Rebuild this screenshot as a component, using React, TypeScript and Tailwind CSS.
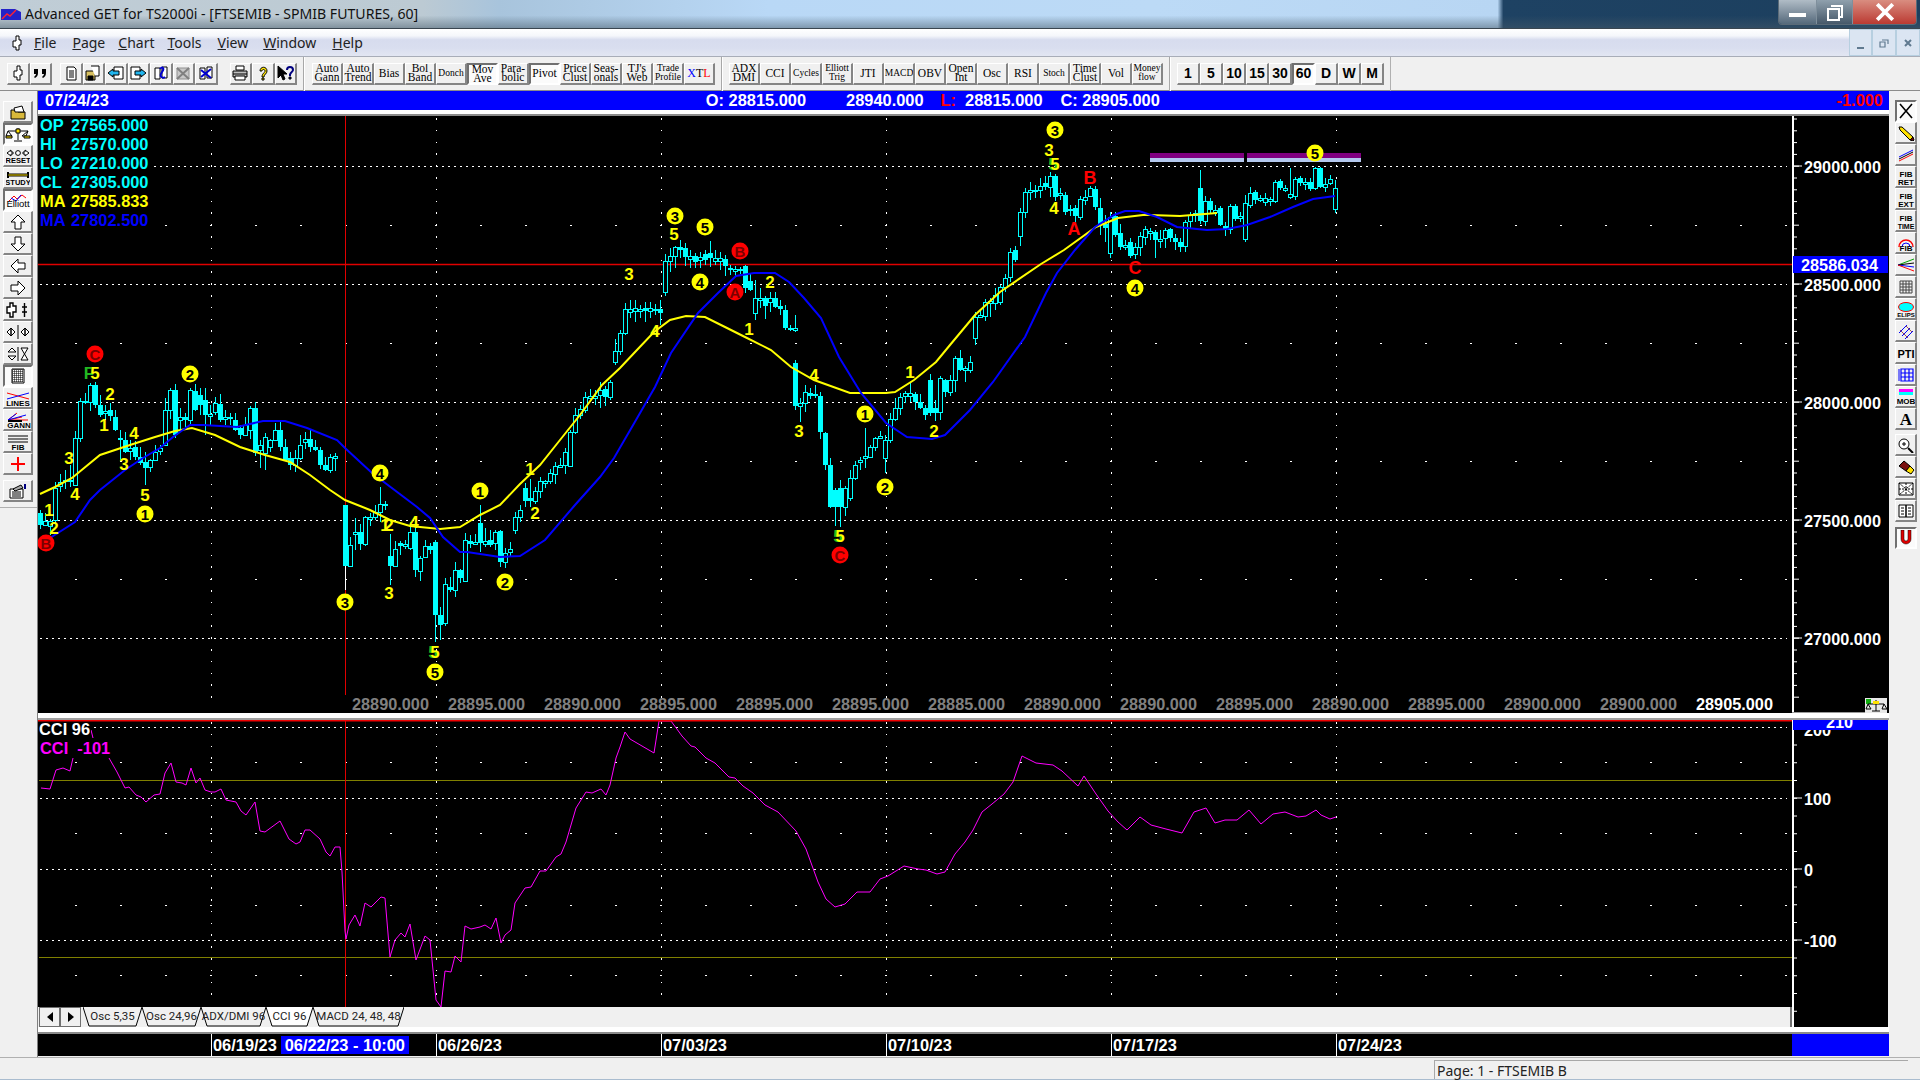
import type { ReactNode } from "react"

type Candle = [number, number, number, number?, number?]

// candle rows are [top, bottom, filled, high, low] in page pixels, one bar every 5px
const candleSegments: { start: number; rows: Candle[] }[] = [
  {
    start: 40,
    rows: [
      [513, 525, 1], [521, 525, 0], [521, 526, 0], [488, 520, 0], [482, 486, 0, 474, 492], [480, 482, 1, 470], [480, 482, 1, 465], [438, 485, 0],
      [401, 438, 0], [401, 403, 1], [385, 402, 0], [385, 405, 1, 382], [405, 415, 1], [411, 413, 0, 405], [410, 416, 1, 403], [417, 430, 1],
      [438, 440, 1, 430, 460], [440, 452, 1], [448, 451, 0, 440], [447, 457, 1], [457, 463, 1], [462, 468, 1, 452, 485], [460, 467, 0], [452, 460, 0],
      [448, 451, 0, 445], [410, 445, 0, 398], [390, 410, 0], [390, 435, 1], [417, 420, 0, 408, 430], [417, 420, 1], [390, 420, 0, 388], [391, 410, 1],
      [395, 405, 1, 388, 415], [400, 415, 1, 388, 435], [414, 416, 0, 405, 425], [403, 412, 0], [404, 420, 1], [417, 419, 0, 410, 425], [417, 419, 1, 413, 425], [420, 430, 1],
      [428, 435, 1], [425, 435, 0], [408, 430, 0], [408, 453, 1], [445, 450, 0, 440, 468], [437, 453, 0, 433, 470], [440, 447, 0], [430, 440, 0],
      [430, 447, 1, 420], [447, 460, 1], [458, 465, 1, 452, 470], [458, 465, 0, 450, 472], [445, 458, 0], [439, 442, 0, 432], [439, 447, 1, 430], [447, 450, 1],
      [450, 465, 1], [465, 470, 1], [457, 470, 0, 454, 473], [456, 458, 0, 453, 471],
    ],
  },
  {
    start: 345,
    rows: [
      [505, 566, 1, 505, 567], [545, 566, 0], [532, 534, 0, 518, 550], [532, 544, 1, 524, 550], [517, 544, 0, 516], [517, 519, 0], [512, 517, 0, 505, 520], [504, 512, 0, 487, 522], [504, 506, 1],
    ],
  },
  {
    start: 390,
    rows: [
      [556, 566, 1, 534, 585], [549, 566, 0], [543, 546, 1], [544, 546, 0, 540], [532, 548, 0], [532, 570, 1], [558, 571, 0, 556, 581], [546, 557, 0, 540], [546, 550, 1],
      [542, 615, 1, 540, 642], [615, 625, 1, 607, 640], [584, 623, 0], [587, 590, 1], [570, 590, 0, 562], [570, 578, 1], [540, 581, 0, 533], [541, 544, 1, 535], [542, 544, 0],
      [523, 543, 1, 505], [541, 544, 0, 528], [540, 545, 1, 530], [532, 543, 0, 530], [531, 562, 1], [553, 562, 0, 548, 568], [549, 552, 0, 542],
    ],
  },
  {
    start: 515,
    rows: [
      [517, 530, 0, 512], [510, 517, 0, 505, 522], [488, 501, 1, 483, 507], [498, 501, 1, 479, 507], [491, 501, 0, 487, 504], [481, 491, 0, 477], [481, 483, 0], [473, 481, 0, 469, 484],
      [466, 474, 0, 462, 484], [465, 467, 0, 458], [452, 465, 0, 448], [432, 466, 0, 430, 467], [415, 432, 0, 408], [409, 415, 0, 405, 419], [397, 410, 0, 392, 413], [396, 398, 0, 389],
      [396, 398, 0, 390, 405], [390, 395, 0, 382, 408], [389, 397, 1, 386], [382, 397, 0, 380], [351, 362, 0, 339, 365], [333, 351, 0, 330, 355], [309, 333, 0, 303, 335], [309, 312, 0, 300, 318],
      [308, 311, 0, 300, 322], [309, 311, 0, 305, 318], [308, 311, 1, 302, 322], [308, 311, 0, 302, 318], [309, 311, 1, 304, 315], [309, 313, 1, 300, 325],
      [261, 292, 0, 254, 296], [256, 261, 0, 248, 272], [247, 256, 0, 246, 268], [247, 250, 1, 240, 258], [248, 257, 1, 243], [256, 259, 0, 250, 268], [256, 262, 1, 253, 268], [257, 260, 0, 252, 268],
      [254, 260, 1, 250, 265], [253, 258, 1, 241, 267], [258, 261, 0, 250, 265], [258, 261, 0, 252, 270], [259, 266, 1, 255, 276], [268, 270, 1, 265, 275], [269, 271, 0, 266, 276], [269, 271, 1, 267, 274],
      [266, 288, 1, 265], [281, 290, 1],
      [298, 313, 0, 280, 320], [298, 300, 0, 288, 308], [298, 306, 1, 296, 319], [298, 302, 0, 292, 312], [298, 307, 1, 292, 308], [306, 309, 1, 300, 315], [310, 328, 1, 305, 330], [328, 330, 1, 325, 331], [328, 330, 0, 315, 332],
    ],
  },
  {
    start: 795,
    rows: [
      [363, 406, 1], [403, 406, 0, 398, 422], [392, 403, 0, 385], [393, 396, 1, 388], [394, 396, 1, 385], [396, 432, 1], [433, 465, 1], [465, 507, 1], [490, 507, 1, 488, 526], [488, 507, 1, 480, 527],
      [488, 507, 0], [478, 498, 0, 470], [465, 478, 0, 461], [460, 462, 0, 457, 470], [456, 458, 0, 428, 468], [447, 457, 0, 445], [438, 447, 0, 437], [436, 438, 0, 431], [440, 458, 0, 435, 473], [419, 440, 0],
      [408, 419, 0], [397, 408, 0], [393, 396, 0, 391, 403], [393, 396, 0, 382, 402], [394, 402, 1, 392, 410], [402, 408, 1], [408, 415, 1, 405, 420], [380, 413, 1], [408, 413, 1, 400, 421], [378, 412, 0, 376, 420],
      [380, 392, 1], [380, 392, 0, 375, 396], [358, 380, 0, 356, 392], [358, 370, 1], [368, 370, 0, 366, 382], [362, 370, 0],
    ],
  },
  {
    start: 975,
    rows: [
      [317, 338, 0, 312, 345], [315, 317, 0, 310], [302, 316, 0, 299, 321], [301, 303, 0, 298, 317], [295, 303, 0, 288, 310], [287, 302, 0, 285, 305], [278, 287, 0, 274], [252, 277, 0, 248, 282],
      [250, 260, 1, 246, 262], [212, 236, 0, 208, 246], [192, 212, 0, 188, 218], [190, 192, 0, 182, 200], [190, 192, 1, 185, 198], [186, 190, 0, 178, 198], [183, 187, 1, 176, 190], [176, 187, 0, 172, 197],
      [176, 197, 1, 174], [193, 195, 0, 188, 200], [195, 212, 1, 192, 215], [209, 211, 1, 205, 216], [208, 216, 1, 205, 222], [199, 217, 0, 196, 220], [197, 200, 0, 190, 205], [188, 196, 0, 186],
      [189, 207, 1, 186, 210], [208, 225, 1, 198, 235], [224, 228, 1, 215, 242], [217, 253, 0, 212, 258], [216, 235, 1, 212], [233, 247, 1, 224, 250], [245, 247, 0, 240, 250], [242, 256, 1, 238, 258],
      [247, 254, 0, 243, 259], [236, 247, 0, 232, 256], [229, 237, 0, 226, 245], [231, 233, 0, 228, 240], [232, 240, 1, 230, 258], [239, 241, 0, 230, 248], [230, 238, 0, 228, 248], [229, 238, 1, 228, 242],
      [238, 242, 1, 234, 250], [242, 247, 1, 238, 252], [222, 246, 0, 220, 252], [215, 221, 0, 212, 228], [213, 215, 0, 210, 222], [188, 221, 1, 170, 224], [201, 221, 0, 196, 226], [201, 210, 1, 198, 214],
      [210, 212, 0, 205, 216], [208, 225, 1, 206, 226], [226, 229, 1, 222, 236], [206, 229, 0, 204, 234], [206, 219, 1, 204], [216, 218, 0, 212, 222], [203, 239, 0, 195, 242], [193, 205, 0, 187, 208],
      [192, 200, 1, 190], [198, 200, 0, 195, 202], [198, 202, 0, 193, 206], [199, 201, 0, 197, 206], [182, 201, 0, 180], [181, 188, 1, 179, 190], [188, 190, 0, 185, 192], [194, 197, 0, 168, 199],
      [179, 196, 0, 177], [178, 183, 1, 176, 186], [182, 184, 0, 178, 190], [182, 189, 1, 178, 191], [168, 188, 0, 167], [168, 187, 1, 167, 188], [184, 187, 0, 178], [179, 183, 0, 175, 185],
      [188, 209, 0, 180, 213],
    ],
  },
]

const yellowLine = [[40, 494], [55, 487], [72, 478], [100, 455], [130, 445], [155, 437], [175, 431], [192, 428], [215, 435], [240, 447], [265, 455], [290, 462], [310, 475], [330, 490], [345, 500], [370, 510], [390, 520], [410, 526], [440, 529], [460, 527], [480, 515], [500, 505], [520, 484], [540, 465], [560, 440], [580, 415], [602, 385], [620, 368], [636, 351], [654, 332], [670, 320], [686, 316], [705, 317], [725, 327], [745, 337], [771, 350], [791, 367], [814, 380], [850, 393], [886, 393], [895, 392], [914, 380], [936, 362], [950, 345], [975, 315], [1000, 292], [1041, 264], [1064, 250], [1096, 227], [1118, 218], [1143, 215], [1150, 215], [1180, 216], [1217, 213]]

const blueLine = [[50, 538], [75, 522], [90, 500], [100, 490], [125, 470], [143, 458], [160, 448], [173, 437], [190, 425], [203, 425], [237, 427], [263, 421], [285, 421], [307, 428], [337, 440], [345, 448], [372, 473], [417, 507], [430, 518], [443, 537], [460, 552], [467, 552], [500, 557], [520, 556], [545, 540], [575, 505], [600, 477], [614, 458], [636, 420], [655, 387], [671, 353], [698, 313], [718, 293], [736, 276], [754, 273], [775, 273], [789, 282], [804, 298], [821, 318], [839, 357], [861, 393], [886, 423], [907, 437], [932, 439], [945, 435], [970, 410], [993, 382], [1025, 337], [1046, 293], [1057, 273], [1075, 250], [1095, 227], [1114, 215], [1125, 211], [1139, 211], [1157, 217], [1177, 227], [1207, 230], [1227, 229], [1247, 225], [1270, 217], [1293, 207], [1313, 199], [1335, 196]]

// zoomed readings of the CCI line: x is 30 + zx / 2.24, y is 715 + zy / 3
const cciFirst: [number, number][] = [[25, 220], [45, 223], [58, 165], [75, 160], [90, 168], [97, 130]]
const cciRest: [number, number][] = [[137, 45], [142, 70], [178, 130], [195, 170], [213, 220], [222, 217], [238, 240], [248, 247], [260, 262], [278, 240], [292, 237], [303, 175], [315, 143], [327, 202], [340, 203], [349, 210], [360, 160], [371, 205], [381, 190], [393, 225], [405, 230], [415, 232], [427, 221], [438, 255], [450, 258], [462, 262], [472, 288], [483, 300], [505, 262], [516, 348], [527, 350], [560, 317], [580, 372], [595, 387], [605, 380], [617, 345], [628, 345], [650, 372], [662, 410], [672, 422], [683, 395], [695, 396], [700, 470], [705, 648], [708, 672], [715, 630], [728, 600], [740, 633], [751, 565], [763, 577], [786, 545], [795, 550], [807, 725], [818, 675], [830, 655], [840, 667], [852, 626], [864, 735], [885, 662], [897, 675], [902, 765], [910, 855], [920, 875], [930, 767], [942, 772], [953, 722], [965, 740], [975, 633], [987, 642], [1007, 637], [1020, 630], [1032, 643], [1043, 608], [1055, 685], [1065, 660], [1077, 645], [1087, 565], [1108, 520], [1122, 517], [1143, 468], [1155, 468], [1178, 425], [1190, 418], [1200, 380], [1222, 280], [1245, 232], [1258, 235], [1278, 222], [1290, 240], [1300, 210], [1312, 130], [1322, 95], [1333, 50], [1345, 72], [1398, 115], [1410, 18], [1435, 18], [1460, 62], [1480, 92], [1490, 95], [1515, 130], [1535, 145], [1565, 187]]
const cciEnd = [[735, 778], [743, 783], [753, 796], [765, 803], [778, 814], [796, 827], [806, 852], [818, 882], [826, 896], [835, 910], [845, 902], [857, 894], [870, 888], [880, 882], [888, 876], [904, 863], [918, 872], [926, 868], [937, 876], [945, 868], [955, 857], [965, 842], [973, 827], [982, 815], [992, 802], [1004, 796], [1013, 778], [1022, 759], [1036, 763], [1053, 762], [1062, 774], [1078, 784], [1084, 778], [1096, 790], [1108, 814], [1118, 822], [1127, 827], [1140, 820], [1151, 823], [1166, 831], [1182, 829], [1194, 815], [1206, 808], [1215, 820], [1225, 823], [1237, 818], [1249, 812], [1261, 820], [1273, 817], [1285, 812], [1298, 814], [1306, 819], [1316, 808], [1321, 817], [1330, 815], [1336, 820]]
const cciJitter = [0, 3, -3, 2, -2, 4, -3]
const zoomPoint = ([x, y]: [number, number]) => [Math.round(30 + x / 2.24), Math.round(715 + y / 3)]

const marks: [string, number, number, string][] = [
  ["r", 95, 354, "C"], ["g", 89, 373, "F"], ["t", 95, 373, "5"], ["t", 110, 394, "2"], ["t", 104, 425, "1"], ["t", 134, 433, "4"], ["t", 124, 464, "3"], ["t", 69, 458, "3"], ["t", 75, 494, "4"], ["t", 145, 495, "5"],
  ["c", 145, 514, "1"], ["t", 49, 510, "1"], ["t", 54, 528, "2"], ["r", 46, 543, "B"], ["c", 190, 374, "2"], ["c", 380, 473, "4"], ["t", 385, 525, "1"], ["t", 389, 525, "2"], ["t", 414, 522, "4"], ["c", 345, 602, "3"],
  ["t", 389, 593, "3"], ["c", 480, 491, "1"], ["c", 505, 582, "2"], ["g", 433, 652, "5"], ["t", 435, 652, "5"], ["c", 435, 672, "5"], ["t", 530, 469, "1"], ["t", 535, 513, "2"], ["t", 629, 274, "3"], ["c", 675, 216, "3"],
  ["t", 674, 234, "5"], ["c", 705, 227, "5"], ["c", 700, 282, "4"], ["r", 740, 251, "B"], ["r", 735, 292, "A"], ["t", 770, 282, "2"], ["t", 749, 329, "1"], ["t", 655, 331, "4"], ["t", 814, 375, "4"], ["t", 799, 431, "3"],
  ["c", 865, 414, "1"], ["t", 910, 372, "1"], ["t", 934, 431, "2"], ["c", 885, 487, "2"], ["g", 838, 536, "5"], ["t", 840, 536, "5"], ["r", 840, 555, "C"], ["c", 1055, 130, "3"], ["t", 1049, 150, "3"], ["g", 1053, 164, "5"],
  ["t", 1055, 164, "5"], ["t", 1054, 208, "4"], ["l", 1090, 178, "B"], ["l", 1074, 229, "A"], ["l", 1135, 268, "C"], ["c", 1135, 288, "4"], ["c", 1315, 153, "5"],
]

const ohlc: [string, string, string][] = [
  ["OP", "27565.000", "#00ffff"], ["HI", "27570.000", "#00ffff"], ["LO", "27210.000", "#00ffff"], ["CL", "27305.000", "#00ffff"], ["MA", "27585.833", "#ffff00"], ["MA", "27802.500", "#0000ff"],
]

const bottomValues = ["28890.000", "28895.000", "28890.000", "28895.000", "28895.000", "28895.000", "28885.000", "28890.000", "28890.000", "28895.000", "28890.000", "28895.000", "28900.000", "28900.000"]

const dateX = [211, 436, 661, 886, 1111, 1336]
const points = (list: number[][]) => list.map((p) => p.join(",")).join(" ")
const upWick = [3, 8, 2, 6, 10, 4, 1, 7]
const downWick = [4, 1, 9, 3, 2, 7, 5, 1]

function Candles() {
  const out: ReactNode[] = []
  candleSegments.forEach((seg) => {
    seg.rows.forEach((row, i) => {
      const x = seg.start + i * 5
      const [top, bottom, filled, hi, lo] = row
      const high = hi ?? top - upWick[i % 8]
      const low = lo ?? bottom + downWick[i % 8]
      out.push(<line key={`w${x}`} x1={x + 0.5} x2={x + 0.5} y1={high} y2={low} stroke="#00ffff" />)
      out.push(
        filled ? (
          <rect key={`b${x}`} x={x - 2} y={top} width={5} height={Math.max(bottom - top, 2)} fill="#00ffff" />
        ) : (
          <rect key={`b${x}`} x={x - 1.5} y={top + 0.5} width={4} height={Math.max(bottom - top, 2)} fill="#000" stroke="#00ffff" />
        ),
      )
    })
  })
  return <g shapeRendering="crispEdges">{out}</g>
}

function GridDots({ top, bottom, rows, half, start }: { top: number; bottom: number; rows: number[]; half: number[]; start: number }) {
  return (
    <g stroke="#fff" shapeRendering="crispEdges">
      {rows.map((y) => (
        <line key={y} x1={start} x2={1787} y1={y + 0.5} y2={y + 0.5} strokeDasharray="1.5 4.5" />
      ))}
      {half.map((y) => (
        <line key={y} x1={30} x2={1787} y1={y + 0.5} y2={y + 0.5} strokeDasharray="1.5 43.5" />
      ))}
      {dateX.map((x) => (
        <line key={x} x1={x + 0.5} x2={x + 0.5} y1={top} y2={bottom} strokeDasharray="1.5 10.3" />
      ))}
    </g>
  )
}

function Mark({ kind, x, y, label }: { kind: string; x: number; y: number; label: string }) {
  if (kind === "c" || kind === "r") {
    const color = kind === "c" ? "#ffff00" : "#ff0000"
    return (
      <g>
        <circle cx={x} cy={y} r={8.5} fill={color} />
        <text x={x} y={y + 5.500} textAnchor="middle" fontSize={15} fontWeight={700} fill={kind === "c" ? "#000" : "#7a0000"}>
          {label}
        </text>
      </g>
    )
  }
  const fill = kind === "g" ? "#22b822" : kind === "l" ? "#ff0000" : "#ffff00"
  return (
    <text x={x} y={y + 6} textAnchor="middle" fontSize={kind === "l" ? 18 : 17} fontWeight={700} fill={fill}>
      {label}
    </text>
  )
}

function PriceChart() {
  return (
    <svg viewBox="38 116 1754 597" className="w-[1754px] h-[597px] shrink-0 bg-black font-['Liberation_Sans',sans-serif]">
      <GridDots top={118} bottom={698} rows={[166, 284, 402, 520, 638]} half={[225, 343, 461, 579]} start={40} />
      <line x1={345.5} x2={345.5} y1={116} y2={695} stroke="#e00000" />
      <line x1={38} x2={1792} y1={264.5} y2={264.5} stroke="#e00000" strokeWidth={1.5} />
      <Candles />
      <line x1={345.5} x2={345.5} y1={566} y2={590} stroke="#fff" />
      <rect x={1150} y={153} width={94} height={5} fill="#800080" />
      <rect x={1150} y={158} width={94} height={4} fill="#b4c8ee" />
      <rect x={1247} y={153} width={114} height={5} fill="#800080" />
      <rect x={1247} y={158} width={114} height={4} fill="#b4c8ee" />
      <polyline points={points(yellowLine)} fill="none" stroke="#ffff00" strokeWidth={2} />
      <polyline points={points(blueLine)} fill="none" stroke="#0000ff" strokeWidth={2} />
      {marks.map(([kind, x, y, label], i) => (
        <Mark key={i} kind={kind} x={x} y={y} label={label} />
      ))}
      <rect x={39} y={116} width={115} height={114} fill="#000" />
      {ohlc.map(([name, value, color], i) => (
        <g key={i} fill={color} fontSize={16.4} fontWeight={700}>
          <text x={40} y={131 + i * 19}>{name}</text>
          <text x={71} y={131 + i * 19}>{value}</text>
        </g>
      ))}
      <g fontSize={16.3} fontWeight={700}>
        {bottomValues.map((v, i) => (
          <text key={i} x={352 + i * 96} y={710} fill="#808080">{v}</text>
        ))}
        <text x={1696} y={710} fill="#fff">28905.000</text>
      </g>
    </svg>
  )
}

function PriceAxis() {
  const ticks = Array.from({ length: 50 }, (_, i) => 119 + i * 11.8)
  return (
    <svg viewBox="1792 116 97 597" className="w-[97px] h-[597px] shrink-0 bg-black font-['Liberation_Sans',sans-serif]">
      <line x1={1793} x2={1793} y1={116} y2={713} stroke="#fff" strokeWidth={2} />
      {ticks.map((y, i) => (
        <line key={i} x1={1793} x2={i % 5 === 4 ? 1799 : 1797} y1={y} y2={y} stroke="#fff" />
      ))}
      <g fill="#fff" fontSize={16.3} fontWeight={700}>
        {[["29000.000", 166], ["28500.000", 284], ["28000.000", 402], ["27500.000", 520], ["27000.000", 638]].map(([label, y]) => (
          <g key={label}>
            <line x1={1793} x2={1802} y1={y} y2={y} stroke="#fff" />
            <text x={1804} y={Number(y) + 7}>{label}</text>
          </g>
        ))}
      </g>
      <rect x={1793} y={256} width={95} height={17} fill="#0000ff" />
      <text x={1801} y={270.5} fill="#fff" fontSize={16.3} fontWeight={700}>28586.034</text>
      <rect x={1792} y={712} width={73} height={1} fill="#999" />
      <g transform="translate(1865 698)">
        <rect width={22} height={15} fill="#e8e8e8" />
        <rect x={1} y={1} width={5} height={5} fill="#11b011" />
        <path d="M3 6h16M11 2v11M7 13h8M3 6l-2 5h5zM19 6l-2 5h5z" fill="none" stroke="#000" />
        <path d="M8 3h6v3H8z" fill="#ffe100" />
      </g>
    </svg>
  )
}

function CciChart() {
  const line = [...cciRest.map(zoomPoint), ...cciEnd.map(([x, y], i) => [x, y + cciJitter[i % 7]])]
  return (
    <svg viewBox="38 720 1754 287" className="w-[1754px] h-[287px] bg-black font-['Liberation_Sans',sans-serif]">
      <GridDots top={722} bottom={1005} rows={[727, 798, 869, 940]} half={[762, 833, 905, 975]} start={40} />
      <line x1={39} x2={1792} y1={780.5} y2={780.5} stroke="#808000" />
      <line x1={39} x2={1792} y1={957.5} y2={957.5} stroke="#808000" />
      <line x1={345.5} x2={345.5} y1={720} y2={1007} stroke="#e00000" />
      <polyline points={points(cciFirst.map(zoomPoint))} fill="none" stroke="#ff00ff" />
      <polyline points={points(line)} fill="none" stroke="#ff00ff" />
      <rect x={38} y={720} width={1754} height={1.5} fill="#f00000" />
      <rect x={39} y={722} width={52} height={16} fill="#000" />
      <rect x={39} y={738} width={72} height={20} fill="#000" />
      <text x={39} y={735} fill="#fff" fontSize={16.4} fontWeight={700}>CCI 96</text>
      <text x={40} y={754} fill="#ff00ff" fontSize={16.4} fontWeight={700} xmlSpace="preserve">CCI  -101</text>
    </svg>
  )
}

function CciAxis() {
  const ticks = Array.from({ length: 17 }, (_, i) => 745 + i * 17.75)
  return (
    <svg viewBox="1792 720 96 307" className="w-[96px] h-[307px] shrink-0 bg-black font-['Liberation_Sans',sans-serif]">
      <line x1={1793} x2={1793} y1={720} y2={1027} stroke="#fff" strokeWidth={2} />
      {ticks.map((y, i) => (
        <line key={i} x1={1793} x2={1797} y1={y} y2={y} stroke="#fff" />
      ))}
      <g fill="#fff" fontSize={16.3} fontWeight={700}>
        <text x={1804} y={736}>200</text>
        {[["100", 798], ["0", 869], ["-100", 940]].map(([label, y]) => (
          <g key={label}>
            <line x1={1793} x2={1802} y1={y} y2={y} stroke="#fff" />
            <text x={1804} y={Number(y) + 7}>{label}</text>
          </g>
        ))}
      </g>
      <rect x={1793} y={720} width={95} height={10} fill="#0000ff" />
      <text x={1826} y={728} fill="#fff" fontSize={16.3} fontWeight={700}>210</text>
    </svg>
  )
}

const raised = "border border-t-white border-l-white border-b-2 border-r-2 border-b-[#858585] border-r-[#858585] bg-[#f0f0f0]"
const sunken = "border-2 border-t-[#707070] border-l-[#707070] border-b-white border-r-white bg-[#fbfbfb]"

function Bar({ w, pressed, children }: { w: "side" | "rail" | "icon" | "text" | "time"; pressed?: boolean; children: ReactNode }) {
  const size = {
    side: "w-[30px] h-[22px]",
    rail: "w-[22px] h-[22px]",
    icon: "w-[22.5px] h-[22px]",
    text: "w-[31px] h-[22px]",
    time: "w-[23px] h-[22px]",
  }[w]
  return <div className={`${size} ${pressed ? sunken : raised} flex shrink-0 items-center justify-center overflow-hidden`}>{children}</div>
}

function Ico({ children, w = 18, h = 16 }: { children: ReactNode; w?: number; h?: number }) {
  return (
    <svg viewBox={`0 0 ${w} ${h}`} width={w} height={h} className="font-['Liberation_Sans',sans-serif]" fill="none" stroke="#000">
      {children}
    </svg>
  )
}

const stemIcon = <path d="M8 1h3v4h2v5h-2v5H8v-3H5V6h3z" fill="#fff" />

const topIcons: ReactNode[] = [
  <Ico><path d="M5 2h7l2 2v11H5z" fill="#fff" /><path d="M7 6h5M7 8h5M7 10h5M7 12h5" /></Ico>,
  <Ico><path d="M2 6h9v9H2z" fill="#d8c060" /><path d="M7 1h8v10h-4" fill="#fff" /><path d="M4 11h5v4H4z" fill="#000" /></Ico>,
  <Ico><path d="M7 2h9v12H7z" fill="#fff" /><path d="M1 8l5-4v2h6v4H6v2z" fill="#21b5ee" /></Ico>,
  <Ico><path d="M2 2h9v12H2z" fill="#fff" /><path d="M17 8l-5-4v2H6v4h6v2z" fill="#21b5ee" /></Ico>,
  <Ico><path d="M3 3h5v11H3zM10 2h5v11h-5z" fill="#fff" /><path d="M8 4c2-3 5-1 2 3s0 7 3 5" stroke="#0000d0" strokeWidth={2} /></Ico>,
  <Ico><path d="M3 3h12v11H3z" fill="#c8c8c8" stroke="#909090" /><path d="M3 3l12 11M15 3L3 14" stroke="#808080" strokeWidth={2} /></Ico>,
  <Ico><path d="M3 3h5v11H3zM10 2h5v11h-5z" fill="#fff" /><path d="M4 5l10 8M14 4L4 12" stroke="#0000d0" strokeWidth={2} /></Ico>,
]

const endIcons: ReactNode[] = [
  <Ico><path d="M5 1h8v4H5z" fill="#fff" /><path d="M2 6h14v6H2z" fill="#c0c0c0" /><path d="M4 11h10v4H4z" fill="#fff" /><path d="M2 9h14" /></Ico>,
  <Ico><path d="M6 6c0-5 7-5 7 0 0 3-3 3-3 6H8c0-4 3-4 3-6 0-2-3-2-3 0z" fill="#ffe600" /><path d="M8 13h2v2H8z" fill="#ffe600" /></Ico>,
  <Ico><path d="M2 1v12l3-3 2 5 2-1-2-5h4z" fill="#000" /><path d="M11 5c0-4 6-4 6 0 0 2-3 2-3 5h-1" stroke="#000080" strokeWidth={2} /><path d="M13 12h2v2h-2z" fill="#000080" /></Ico>,
]

const textButtons: [string, string?, boolean?][] = [
  ["Auto", "Gann"], ["Auto", "Trend"], ["Bias"], ["Bol", "Band"], ["Donch"], ["Mov", "Ave", true], ["Para-", "bolic"], ["Pivot", undefined, true], ["Price", "Clust"], ["Seas-", "onals"], ["TJ's", "Web"], ["Trade", "Profile"],
]
const studyButtons: [string, string?][] = [
  ["ADX", "DMI"], ["CCI"], ["Cycles"], ["Elliott", "Trig"], ["JTI"], ["MACD"], ["OBV"], ["Open", "Int"], ["Osc"], ["RSI"], ["Stoch"], ["Time", "Clust"], ["Vol"], ["Money", "flow"],
]
const timeButtons = ["1", "5", "10", "15", "30", "60", "D", "W", "M"]
const tightLabels = ["Cycles", "Elliott", "Profile", "MACD", "Donch", "Stoch", "Money"]

function TextCell({ a, b }: { a: string; b?: string }) {
  const tight = tightLabels.includes(a) || tightLabels.includes(b ?? "")
  return (
    <div className={`text-center font-['Liberation_Serif',serif] ${tight ? "text-[9.5px]" : "text-[11.5px]"} leading-[9px] text-black whitespace-nowrap`}>
      <div>{a}</div>
      {b && <div>{b}</div>}
    </div>
  )
}

function Separator() {
  return <div className="mx-[6px] h-[34px] w-[2px] shrink-0 border-l border-r border-l-[#a8a8a8] border-r-white" />
}

function Toolbar() {
  return (
    <div className="flex h-[34px] items-center border-b border-b-[#8c8c8c] bg-[#f0f0f0] pl-[7px]">
      <Bar w="icon"><Ico>{stemIcon}</Ico></Bar>
      <Bar w="icon">
        <Ico>
          <path d="M3 4h4v4c0 2-1 4-3 5l-1-1c1-1 2-2 2-3H3zM11 4h4v4c0 2-1 4-3 5l-1-1c1-1 2-2 2-3h-2z" fill="#000" stroke="none" />
        </Ico>
      </Bar>
      <div className="w-[8px] shrink-0" />
      {topIcons.map((icon, i) => <Bar key={i} w="icon">{icon}</Bar>)}
      <div className="w-[12px] shrink-0" />
      {endIcons.map((icon, i) => <Bar key={i} w="icon">{icon}</Bar>)}
      <div className="w-[6px] shrink-0" />
      <div className="h-[34px] w-[2px] shrink-0 border-l border-r border-l-[#a8a8a8] border-r-white" />
      <div className="w-[7px] shrink-0" />
      {textButtons.map(([a, b, pressed]) => (
        <Bar key={a + b} w="text" pressed={pressed}><TextCell a={a} b={b} /></Bar>
      ))}
      <Bar w="text">
        <span className="font-['Liberation_Serif',serif] text-[12px]">
          <span className="text-[#0000ff]">X</span>T<span className="text-[#ff0000]">L</span>
        </span>
      </Bar>
      <Separator />
      {studyButtons.map(([a, b]) => (
        <Bar key={a} w="text"><TextCell a={a} b={b} /></Bar>
      ))}
      <Separator />
      {timeButtons.map((t) => (
        <Bar key={t} w="time" pressed={t === "60"}>
          <span className="font-['Liberation_Sans',sans-serif] text-[14px] font-bold text-black">{t}</span>
        </Bar>
      ))}
      <div className="ml-[6px] h-[34px] w-[1px] shrink-0 bg-[#b0b0b0]" />
    </div>
  )
}

const Lbl = ({ x, y, children, size = 8, fill = "#000" }: { x: number; y: number; children: string; size?: number; fill?: string }) => (
  <text x={x} y={y} textAnchor="middle" fontSize={size} fontWeight={700} stroke="none" fill={fill}>{children}</text>
)

const leftTools: { icon: ReactNode; pressed?: boolean }[] = [
  { icon: <Ico w={22}><path d="M4 6h6l1 2h7v7H4z" fill="#d8b83a" /><path d="M7 4l8-2 2 6H8z" fill="#fff" /></Ico> },
  { icon: <Ico w={26}><path d="M13 2v12M3 5h20M9 15h8" /><path d="M3 5L1 10h6zM23 5l-2 5h-4z" fill="#fff" /><path d="M11 3h4v4h-4zM1 10h6v2H1zM19 10h6v2h-6z" fill="#ffe100" /></Ico>, pressed: true },
  { icon: <Ico w={24}><path d="M1 5l4-3v2h2v2H5v2zM23 5l-4-3v2h-2v2h2v2z" fill="#fff" /><circle cx={12} cy={5} r={2.4} fill="#fff" /><Lbl x={12} y={15} size={7.5}>RESET</Lbl></Ico> },
  { icon: <Ico w={24}><path d="M2 2v6M22 2v6" strokeWidth={2} /><path d="M2 4h20v2H2z" fill="#ffe100" /><Lbl x={12} y={15} size={7.5}>STUDY</Lbl></Ico> },
  { icon: <Ico w={26}><path d="M4 9l5-5 3 3 5-4 4 3" stroke="#ff0000" /><path d="M6 6l5 3 5-6" stroke="#0000ff" /><text x={13} y={15} textAnchor="middle" fontSize={9.500} stroke="none" fill="#000">Elliott</text></Ico>, pressed: true },
  { icon: <Ico><path d="M9 1l7 7h-4v7H6V8H2z" fill="#fff" /></Ico> },
  { icon: <Ico><path d="M9 15l7-7h-4V1H6v7H2z" fill="#fff" /></Ico> },
  { icon: <Ico><path d="M2 8l7-7v4h7v6H9v4z" fill="#fff" /></Ico> },
  { icon: <Ico><path d="M16 8L9 1v4H2v6h7v4z" fill="#fff" /></Ico> },
  { icon: <Ico w={26}><path d="M5 1h3v3h3v6H8v5H5v-4H2V5h3z" fill="#fff" strokeWidth={1.4} /><path d="M17 5h5M22 10h-5M19.500 1v14" strokeWidth={1.4} /></Ico> },
  { icon: <Ico w={26}><path d="M2 8l4-4v8zM10 8L6 4v8zM16 8l4-4v8zM24 8l-4-4v8z" fill="#fff" /><path d="M13 1v14" /></Ico> },
  { icon: <Ico w={26}><path d="M7 2l4 4H3zM7 14l4-4H3z" fill="#fff" /><path d="M13 1v14" /><path d="M16 2h7l-3.500 6zM16 14h7l-3.500-6z" fill="#fff" /></Ico> },
  { icon: <Ico w={22} h={18}><path d="M5 2h12v14H5z" fill="#fff" /><path d="M7 2v14M9 2v14M11 2v14M13 2v14M15 2v14M5 4h12M5 6h12M5 8h12M5 10h12M5 12h12M5 14h12" stroke="#000" strokeDasharray="1 1" /></Ico>, pressed: true },
  { icon: <Ico w={26}><path d="M2 3l22 6" stroke="#ff0000" /><path d="M2 9l22-6" stroke="#0000ff" /><Lbl x={13} y={15.500}>LINES</Lbl></Ico> },
  { icon: <Ico w={26}><path d="M3 8L12 1M3 8l14-3M3 8h20" stroke="#ff0000" /><path d="M3 8l8-6M3 8l18-5" stroke="#0000ff" /><path d="M3 9h14" strokeWidth={2} /><Lbl x={14} y={15.500}>GANN</Lbl></Ico> },
  { icon: <Ico w={26}><path d="M3 2h20M3 5h20M3 8h20" /><Lbl x={13} y={15.500}>FIB</Lbl></Ico> },
  { icon: <Ico><path d="M9 1v14M2 8h14" stroke="#ff0000" strokeWidth={2} /></Ico> },
]

const lastLeft = <Ico w={22}><path d="M3 6h13v9H3z" fill="#fff" /><path d="M5 9h9M5 11h9M5 13h9" /><path d="M6 6l8-4 2 3-8 3z" fill="#aaa" /><path d="M18 1v5" stroke="#000080" strokeWidth={2} /></Ico>

const rightTools: ReactNode[] = [
  <Ico><path d="M3 1l12 14M15 1L3 15" strokeWidth={1.6} /></Ico>,
  <Ico><path d="M2 2l3 0 11 10-3 3L3 5z" fill="#ffe100" /><path d="M13 15l3-3 1 3-1 1z" fill="#600" /></Ico>,
  <Ico><path d="M2 10l14-7" stroke="#0000ff" /><path d="M2 12l14-7" stroke="#000" /><path d="M2 14l14-7" stroke="#ff0000" /></Ico>,
  <Ico><Lbl x={9} y={7.500} size={8}>FIB</Lbl><Lbl x={9} y={15.500} size={8}>RET</Lbl></Ico>,
  <Ico><Lbl x={9} y={7.500} size={8}>FIB</Lbl><Lbl x={9} y={15.500} size={8}>EXT</Lbl></Ico>,
  <Ico><Lbl x={9} y={7.500} size={8}>FIB</Lbl><Lbl x={9} y={15.500} size={7}>TIME</Lbl></Ico>,
  <Ico><path d="M2 12a7 7 0 1 1 14 0" stroke="#ff0000" strokeWidth={1.4} /><path d="M5 12a4 4 0 1 1 8 0" stroke="#0000ff" /><Lbl x={9} y={15.500} size={8}>FIB</Lbl></Ico>,
  <Ico><path d="M1 8l16-6" stroke="#00a000" /><path d="M1 8l16-2" stroke="#000" /><path d="M1 8l16 2" stroke="#0000ff" /><path d="M1 8l16 6" stroke="#ff0000" /></Ico>,
  <Ico><path d="M3 2h12v12H3zM3 5h12M3 8h12M3 11h12M6 2v12M9 2v12M12 2v12" stroke="#444" /></Ico>,
  <Ico><ellipse cx={9} cy={6} rx={7.500} ry={4.500} fill="#00ffff" stroke="#ff0000" /><Lbl x={9} y={15.500} size={6}>ELIPS</Lbl></Ico>,
  <Ico><path d="M2 10l8-8M5 13l8-8M8 16l8-8" stroke="#0000ff" /><path d="M3 7l8 8M9 3l6 6" stroke="#a05050" /></Ico>,
  <Ico><text x={9} y={13} textAnchor="middle" fontSize={11} fontWeight={800} stroke="none" fill="#000">PTI</text></Ico>,
  <Ico><path d="M4 2h12v12H4zM4 6h12M4 10h12M8 2v12M12 2v12" stroke="#0000ff" strokeWidth={1.2} /><path d="M2 2v12" stroke="#0000ff" /></Ico>,
  <Ico><path d="M2 0h14v3H2z" fill="#ff00ff" stroke="none" /><path d="M2 3h14v3H2z" fill="#00ffff" stroke="none" /><Lbl x={9} y={15} size={8}>MOB</Lbl></Ico>,
  <Ico><text x={9} y={14} textAnchor="middle" fontSize={17} fontWeight={700} stroke="none" fill="#000" className="font-['Liberation_Serif',serif]">A</text></Ico>,
]
const rightTools2: ReactNode[] = [
  <Ico><circle cx={7} cy={7} r={5} fill="#fff" /><path d="M5 7h4M7 5v4" /><path d="M11 11l5 5" strokeWidth={2} /></Ico>,
  <Ico><path d="M2 7l5-5 6 5-4 5z" fill="#7a1010" /><path d="M9 12l4-5 4 4-3 4z" fill="#ffe100" /></Ico>,
  <Ico><path d="M2 2h14v12H2z" fill="#fff" /><path d="M2 2l14 12M16 2L2 14M2 8h14M9 2v12" strokeDasharray="2 1" /></Ico>,
  <Ico><path d="M2 2h7v12H2zM9 2h7v12H9z" fill="#fff" /><path d="M4 5h3M4 8h3M4 11h3M11 5h3M11 8h3M11 11h3" /></Ico>,
]

function Tab({ label, width, active }: { label: string; width: "w-[59px]" | "w-[65px]" | "w-[47px]" | "w-[91px]"; active?: boolean }) {
  const inner = { "w-[59px]": 59, "w-[65px]": 65, "w-[47px]": 47, "w-[91px]": 91 }[width]
  return (
    <div className={`relative flex h-[20px] shrink-0 items-center justify-center ${width}`}>
      <svg className="absolute left-0 top-0 h-[20px] w-full" viewBox={`0 0 ${inner} 20`} fill={active ? "#fff" : "#f0f0f0"} stroke="#000">
        <path d={`M0 0L6 19H${inner - 6}L${inner} 0`} />
      </svg>
      <span className="relative font-['Roboto',sans-serif] text-[11.5px] text-[#222] whitespace-nowrap">{label}</span>
    </div>
  )
}

export default function App() {
  return (
    <div className="flex h-[1080px] w-[1920px] flex-col overflow-hidden bg-[#f0f0f0]">
      {/* title bar */}
      <div className="flex h-[29px] shrink-0 items-start border-b border-b-[#3a4650] bg-[linear-gradient(180deg,transparent_55%,rgba(70,90,105,0.5)_100%),linear-gradient(90deg,#c0cdd6_0%,#bccad3_22%,#a8c4dc_26%,#b9d8f6_40%,#bcdaf6_60%,#b8d6f3_78%,#1e4263_78.3%,#1c3f5e_100%)]">
        <svg viewBox="0 0 20 14" width={20} height={14} className="ml-[1px] mt-[7px] shrink-0">
          <path d="M0 2h14l6 3v8H0z" fill="#2222c8" />
          <path d="M1 12l5-5 3 2 6-6" stroke="#ff2030" fill="none" strokeWidth={1.4} />
        </svg>
        <span className="ml-[4px] mt-[4px] font-['Noto_Sans',sans-serif] text-[14.1px] leading-[20px] text-[#111] whitespace-nowrap">Advanced GET for TS2000i - [FTSEMIB - SPMIB FUTURES, 60]</span>
        <div className="ml-auto mr-[3px] flex h-[25px] overflow-hidden rounded-b-[4px] border border-t-0 border-[#5b6b78]">
          <div className="flex w-[38px] items-center justify-center border-r border-r-[#7f8f9c] bg-[linear-gradient(180deg,#b0bcc6,#55697b)]">
            <div className="mt-[6px] h-[4px] w-[17px] bg-white" />
          </div>
          <div className="flex w-[36px] items-center justify-center border-r border-r-[#7f8f9c] bg-[linear-gradient(180deg,#8fa0ad,#47596a)]">
            <svg viewBox="0 0 18 18" width={18} height={18} fill="none" stroke="#fff" strokeWidth={2}>
              <path d="M5 3h11v11h-2" />
              <path d="M2 6h11v11H2z" />
            </svg>
          </div>
          <div className="flex w-[63px] items-center justify-center bg-[linear-gradient(180deg,#d98d80,#bb3a32)]">
            <svg viewBox="0 0 18 16" width={20} height={18} fill="none" stroke="#fff" strokeWidth={3.4}>
              <path d="M2 1l14 14M16 1L2 15" />
            </svg>
          </div>
        </div>
      </div>

      {/* menu bar */}
      <div className="flex h-[28px] shrink-0 items-center border-b border-b-[#a8adb8] bg-[linear-gradient(180deg,#ffffff_0%,#f5f7fb_25%,#d7dcee_40%,#d9deef_70%,#e2e6f2_100%)] font-['Noto_Sans',sans-serif] text-[14px] text-[#222]">
        <div className="ml-[6px] flex w-[22px] shrink-0 justify-center">
          <Ico>{stemIcon}</Ico>
        </div>
        <span className="ml-[6px]"><u>F</u>ile</span>
        <span className="ml-[16px]"><u>P</u>age</span>
        <span className="ml-[13px]"><u>C</u>hart</span>
        <span className="ml-[13px]"><u>T</u>ools</span>
        <span className="ml-[16px]"><u>V</u>iew</span>
        <span className="ml-[15px]"><u>W</u>indow</span>
        <span className="ml-[16px]"><u>H</u>elp</span>
        <div className="ml-auto flex h-full items-stretch text-[#607a90]">
          <div className="flex w-[23px] items-end justify-center border border-[#b7cfe0] bg-[#dbe5f2] pb-[6px]"><div className="h-[2px] w-[7px] bg-[#607a90]" /></div>
          <div className="flex w-[24px] items-center justify-center border border-[#b7cfe0] bg-[#dbe5f2]">
            <svg viewBox="0 0 10 10" width={10} height={10} fill="none" stroke="#607a90" strokeWidth={1.2}><path d="M3 2h6v4M1 4h5v5H1z" /></svg>
          </div>
          <div className="flex w-[24px] items-center justify-center border border-[#b7cfe0] bg-[#dbe5f2]">
            <svg viewBox="0 0 10 10" width={10} height={10} fill="none" stroke="#607a90" strokeWidth={2}><path d="M2 2l6 6M8 2l-6 6" /></svg>
          </div>
        </div>
      </div>

      <Toolbar />

      {/* workspace */}
      <div className="flex h-[966px] shrink-0">
        <div className="w-[38px] shrink-0 border-r border-r-[#808080]">
          <div className="h-[417px] border-b border-b-[#b0b0b0] pl-[3px] pt-[10px]">
            {leftTools.map((tool, i) => (
              <Bar key={i} w="side" pressed={tool.pressed}>{tool.icon}</Bar>
            ))}
            <div className="mt-[5px]">
              <Bar w="side">{lastLeft}</Bar>
            </div>
          </div>
        </div>

        <div className="w-[1851px] shrink-0">
          <div className="flex h-[19px] items-center bg-[#0000ff] font-['Liberation_Sans',sans-serif] text-[16.4px] font-bold text-white">
            <span className="ml-[7px]">07/24/23</span>
            <span className="ml-[597px]">O: 28815.000</span>
            <span className="ml-[40px]">28940.000</span>
            <span className="ml-[17px] text-[#ff0000]">L:</span>
            <span className="ml-[9px]">28815.000</span>
            <span className="ml-[18px]">C: 28905.000</span>
            <span className="ml-auto mr-[6px] text-[#ff0000]">-1.000</span>
          </div>
          <div className="h-[6px] border-b-2 border-b-[#8a8a8a] bg-white" />

          <div className="flex h-[597px]">
            <PriceChart />
            <PriceAxis />
          </div>
          <div className="h-[7px] border-b-2 border-b-[#a0a0a0] bg-white" />

          <div className="flex h-[307px]">
            <div className="w-[1754px] shrink-0 border-r-2 border-r-[#707070]">
              <CciChart />
              <div className="flex h-[20px] bg-[#f0f0f0] pl-[1px]">
                <div className="flex w-[21px] items-center justify-center border border-[#707070] bg-[#f0f0f0]"><svg viewBox="0 0 6 10" width={6} height={10}><path d="M6 0v10L0 5z" fill="#000" /></svg></div>
                <div className="flex w-[21px] items-center justify-center border border-[#707070] bg-[#f0f0f0]"><svg viewBox="0 0 6 10" width={6} height={10}><path d="M0 0v10l6-5z" fill="#000" /></svg></div>
                <div className="ml-[2px] flex">
                  <Tab label="Osc 5,35" width="w-[59px]" />
                  <Tab label="Osc 24,96" width="w-[59px]" />
                  <Tab label="ADX/DMI 96" width="w-[65px]" />
                  <Tab label="CCI 96" width="w-[47px]" active />
                  <Tab label="MACD 24, 48, 48" width="w-[91px]" />
                </div>
              </div>
            </div>
            <CciAxis />
          </div>
          <div className="h-[7px] border-b-2 border-b-[#8a8a8a] bg-white" />

          <div className="flex h-[22px] items-stretch bg-black font-['Liberation_Sans',sans-serif] text-[16.4px] font-bold leading-[22px] text-white">
            <div className="w-[173px] shrink-0" />
            <div className="flex w-[225px] shrink-0 border-l border-l-white pl-[1px]">
              <span>06/19/23</span>
              <span className="ml-[4px] my-[2px] flex w-[128px] items-center justify-center bg-[#0000ff]">06/22/23 - 10:00</span>
            </div>
            {["06/26/23", "07/03/23", "07/10/23", "07/17/23", "07/24/23"].map((d) => (
              <div key={d} className="w-[225px] shrink-0 border-l border-l-white pl-[1px]">{d}</div>
            ))}
            <div className="w-[80px] shrink-0" />
            <div className="ml-auto w-[97px] shrink-0 bg-[#0000ff]" />
          </div>
        </div>

        <div className="w-[31px] shrink-0 pl-[6px] pt-[9px]">
          {rightTools.map((icon, i) => (
            <Bar key={i} w="rail" pressed={i === 0}>{icon}</Bar>
          ))}
          <div className="mt-[4px]">
            {rightTools2.map((icon, i) => (
              <Bar key={i} w="rail">{icon}</Bar>
            ))}
          </div>
          <div className="mt-[5px]">
            <Bar w="rail" pressed>
              <svg viewBox="0 0 14 16" width={14} height={16} fill="none">
                <path d="M2 0h3v9a2 2 0 0 0 4 0V0h3v9a5 5 0 0 1-10 0z" fill="#e00000" stroke="#000" strokeWidth={0.5} />
              </svg>
            </Bar>
          </div>
        </div>
      </div>

      {/* status bar */}
      <div className="flex h-[23px] shrink-0 items-start border-t border-b border-t-[#b0b0b0] border-b-[#a9bccf] pl-[1434px] pt-[2px]">
        <div className="h-[19px] w-[474px] border-l border-t border-[#a8a8a8] pl-[2px] font-['Noto_Sans',sans-serif] text-[14px] leading-[19px] text-[#222]">Page: 1 - FTSEMIB B</div>
      </div>
    </div>
  )
}
